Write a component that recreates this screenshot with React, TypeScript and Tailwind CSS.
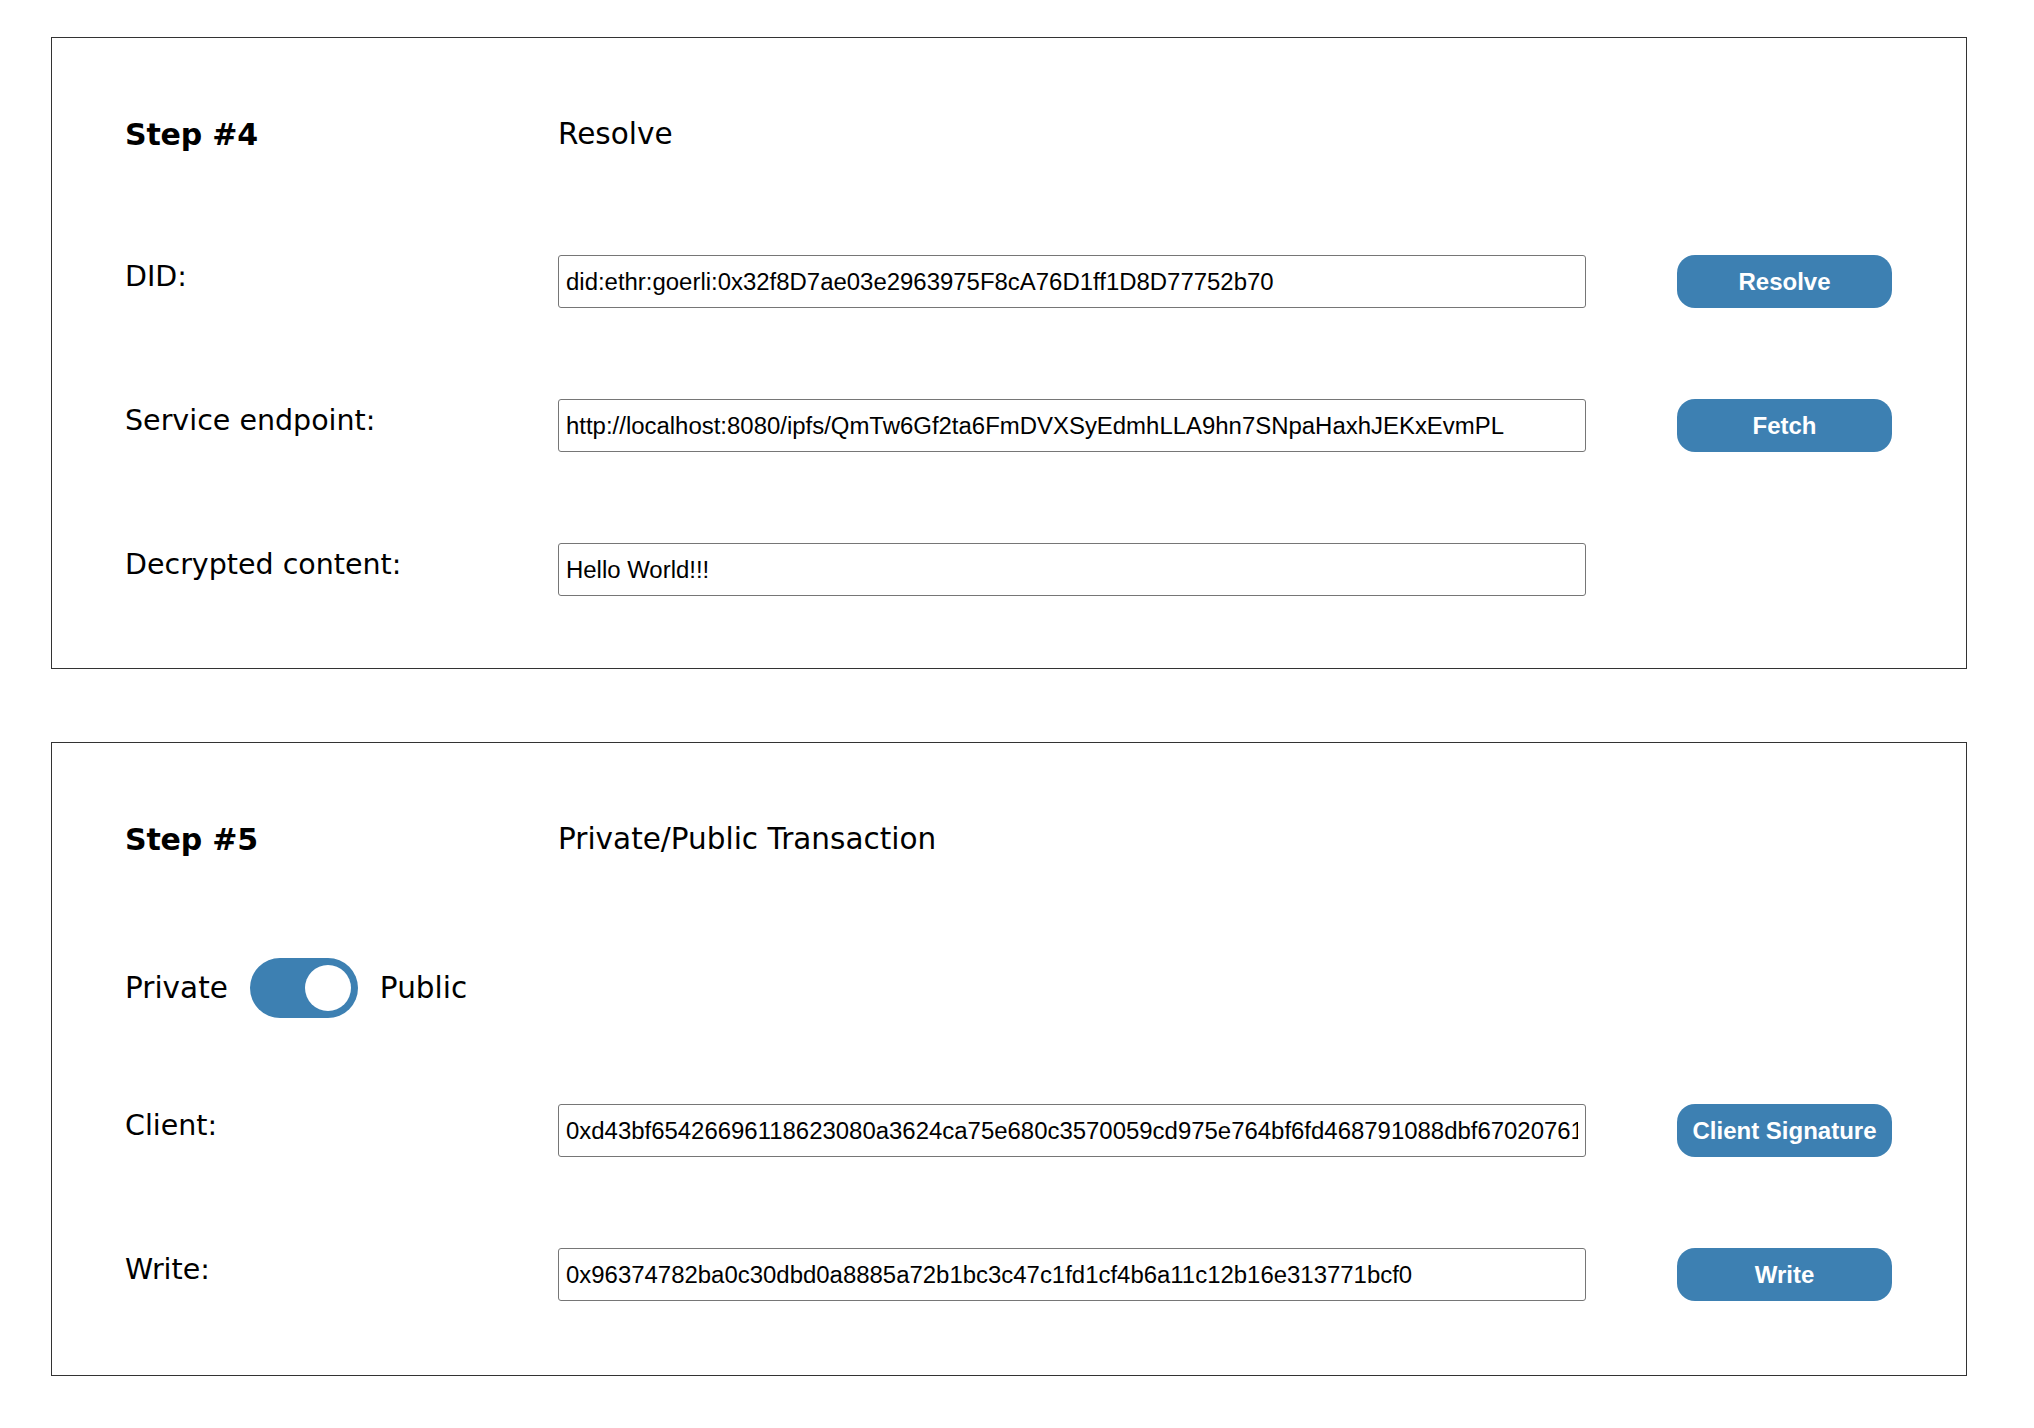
import { useState } from "react";

const labelFont = { fontFamily: '"DejaVu Sans", "Noto Sans", sans-serif' };
const fieldFont = { fontFamily: '"Liberation Sans", Arial, sans-serif' };

function Field({
  label,
  value,
  button,
  className = "",
}: {
  label: string;
  value: string;
  button?: string;
  className?: string;
}) {
  return (
    <div className={`flex items-start ${className}`}>
      <div
        className="w-[433px] shrink-0 pt-[5px] text-[28.5px] leading-[normal] text-black"
        style={labelFont}
      >
        {label}
      </div>
      <input
        readOnly
        value={value}
        className="w-[1028px] h-[53px] shrink-0 border border-[#767676] rounded-[3px] px-[7px] text-[23.95px] text-black bg-white outline-none"
        style={fieldFont}
      />
      {button && (
        <button
          className="ml-[91px] w-[215px] h-[53px] shrink-0 rounded-[18px] bg-[#3d80b2] text-white text-[24px] font-bold"
          style={fieldFont}
        >
          {button}
        </button>
      )}
    </div>
  );
}

function StepHeader({ step, title }: { step: string; title: string }) {
  return (
    <div className="flex items-start">
      <div
        className="w-[433px] shrink-0 text-[30px] font-bold leading-[normal] tracking-[-0.2px] text-black"
        style={labelFont}
      >
        {step}
      </div>
      <div className="text-[29.5px] leading-[normal] text-black" style={labelFont}>
        {title}
      </div>
    </div>
  );
}

export default function App() {
  const [isPublic, setIsPublic] = useState(true);

  return (
    <div className="min-h-[1428px] bg-white pt-[37px] pb-[52px]">
      {/* Step 4 */}
      <section className="ml-[51px] w-[1916px] border border-[#333] pl-[73px] pt-[79px] pb-[72px]">
        <StepHeader step="Step #4" title="Resolve" />
        <Field
          className="mt-[103px]"
          label="DID:"
          value="did:ethr:goerli:0x32f8D7ae03e2963975F8cA76D1ff1D8D77752b70"
          button="Resolve"
        />
        <Field
          className="mt-[91px]"
          label="Service endpoint:"
          value="http://localhost:8080/ipfs/QmTw6Gf2ta6FmDVXSyEdmhLLA9hn7SNpaHaxhJEKxEvmPL"
          button="Fetch"
        />
        <Field className="mt-[91px]" label="Decrypted content:" value="Hello World!!!" />
      </section>

      {/* Step 5 */}
      <section className="ml-[51px] mt-[73px] w-[1916px] border border-[#333] pl-[73px] pt-[79px] pb-[74px]">
        <StepHeader step="Step #5" title="Private/Public Transaction" />

        <div className="mt-[101px] flex items-center h-[60px]">
          <span className="text-[29.5px] leading-[normal] text-black" style={labelFont}>
            Private
          </span>
          <button
            onClick={() => setIsPublic((v) => !v)}
            className={`mx-[22px] w-[108px] h-[60px] rounded-full p-[7px] flex items-center ${
              isPublic ? "justify-end bg-[#3d80b2]" : "justify-start bg-[#c4c4c4]"
            }`}
            aria-label="Toggle private/public"
          >
            <span className="block w-[46px] h-[46px] rounded-full bg-white" />
          </button>
          <span className="text-[29.5px] leading-[normal] text-black" style={labelFont}>
            Public
          </span>
        </div>

        <Field
          className="mt-[86px]"
          label="Client:"
          value="0xd43bf65426696118623080a3624ca75e680c3570059cd975e764bf6fd468791088dbf67020761"
          button="Client Signature"
        />
        <Field
          className="mt-[91px]"
          label="Write:"
          value="0x96374782ba0c30dbd0a8885a72b1bc3c47c1fd1cf4b6a11c12b16e313771bcf0"
          button="Write"
        />
      </section>
    </div>
  );
}
